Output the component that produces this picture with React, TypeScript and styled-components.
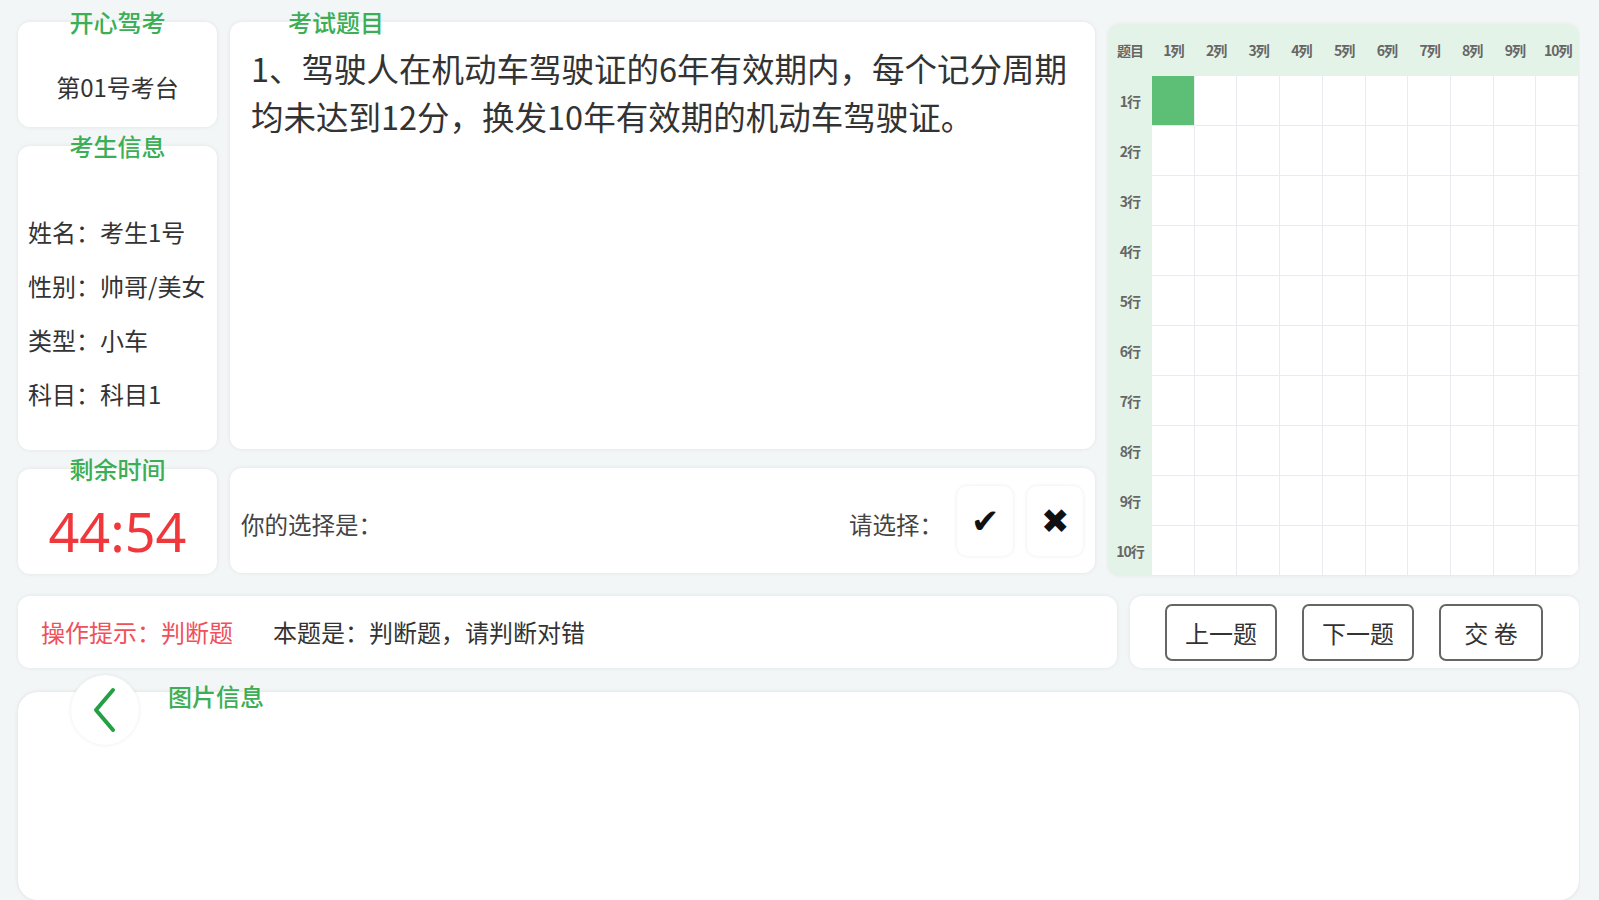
import { Fragment } from 'react'
import styled, { createGlobalStyle } from 'styled-components'

const GlobalStyle = createGlobalStyle`
	html, body {
		margin: 0;
		padding: 0;
		background: #f3f6f7;
		font-family: "Noto Sans CJK SC", "Noto Sans", sans-serif;
		color: #333;
	}
`

const Page = styled.div`
	display: flex;
	flex-direction: column;
	width: 1562px;
	height: 878px;
	padding: 22px 0 0 18px;
	overflow: hidden;
`

const Top = styled.div`
	display: flex;
	gap: 13px;
	height: 552px;
`

const Column = styled.div<{ $width: number }>`
	display: flex;
	flex-direction: column;
	gap: 19px;
	width: ${p => p.$width}px;
	flex-shrink: 0;
`

const Card = styled.div<{ $height: number }>`
	position: relative;
	height: ${p => p.$height}px;
	background: #fff;
	border-radius: 12px;
	box-shadow: 0 0 4px rgba(0, 0, 0, 0.08);
	box-sizing: border-box;
`

const Title = styled.div<{ $left?: number; $top?: number }>`
	position: absolute;
	top: ${p => p.$top ?? -14}px;
	${p => (p.$left !== undefined ? `left: ${p.$left}px;` : 'left: 0; right: 0; text-align: center;')}
	color: #3cae55;
	font-size: 24px;
	font-weight: 500;
	line-height: 28px;
`

const Station = styled.div`
	display: flex;
	align-items: center;
	justify-content: center;
	height: 100%;
	padding-top: 24px;
	box-sizing: border-box;
	font-size: 24px;
	color: #333;
`

const InfoList = styled.div`
	display: flex;
	flex-direction: column;
	gap: 20px;
	padding: 69px 0 0 10px;
	font-size: 24px;
	line-height: 34px;
	color: #333;
`

const Timer = styled.div`
	display: flex;
	align-items: center;
	justify-content: center;
	height: 100%;
	padding-top: 18px;
	box-sizing: border-box;
	font-size: 54px;
	color: #f0373c;
	font-family: "Noto Sans", sans-serif;
`

const Question = styled.div`
	padding: 22px 10px 0 21px;
	font-size: 32.5px;
	line-height: 48px;
	color: #333;
`

const AnswerRow = styled.div`
	display: flex;
	align-items: center;
	height: 100%;
	padding: 6px 12px 0 11px;
	box-sizing: border-box;
	font-size: 23.5px;
	color: #444;
`

const Spacer = styled.div`
	flex: 1;
`

const ChoiceButton = styled.button`
	display: flex;
	align-items: center;
	justify-content: center;
	width: 56px;
	height: 70px;
	margin: -6px 0 0 14px;
	border: none;
	border-radius: 10px;
	background: #fff;
	box-shadow: 0 0 4px rgba(0, 0, 0, 0.08);
	font-size: 34px;
	color: #111;
	padding: 0;
`

const GridPanel = styled.div`
	display: grid;
	grid-template-columns: 44px repeat(10, 1fr);
	grid-template-rows: 52px repeat(10, 1fr);
	width: 471px;
	height: 552px;
	margin-top: 2px;
	background: #e4f3e8;
	border-radius: 12px;
	overflow: hidden;
	box-shadow: 0 0 4px rgba(0, 0, 0, 0.06);
`

const HeadCell = styled.div`
	display: flex;
	align-items: center;
	justify-content: center;
	font-size: 14px;
	font-weight: 700;
	color: #666;
	letter-spacing: -1px;
`

const Cell = styled.div<{ $active?: boolean }>`
	background: ${p => (p.$active ? '#5cbf75' : '#fff')};
	border-right: 1px solid #e8ebef;
	border-bottom: 1px solid #e8ebef;
`

const Middle = styled.div`
	display: flex;
	gap: 13px;
	height: 79px;
	margin-top: 22px;
`

const Hint = styled.div`
	display: flex;
	align-items: center;
	width: 1099px;
	height: 100%;
	padding-left: 23px;
	box-sizing: border-box;
	background: #fff;
	border-radius: 12px;
	box-shadow: 0 0 4px rgba(0, 0, 0, 0.08);
	font-size: 24px;
`

const HintRed = styled.span`
	color: #f0505a;
	margin-right: 40px;
`

const HintText = styled.span`
	color: #333;
`

const NavPanel = styled.div`
	display: flex;
	align-items: center;
	gap: 25px;
	width: 449px;
	height: 100%;
	padding: 2px 0 0 35px;
	box-sizing: border-box;
	background: #fff;
	border-radius: 12px;
	box-shadow: 0 0 4px rgba(0, 0, 0, 0.08);
`

const NavButton = styled.button<{ $width: number }>`
	width: ${p => p.$width}px;
	height: 57px;
	border: 2px solid #666;
	border-radius: 7px;
	background: #fff;
	font-family: "Noto Sans CJK SC", sans-serif;
	font-size: 24px;
	color: #333;
	padding: 0;
`

const PictureCard = styled.div`
	position: relative;
	width: 1561px;
	height: 230px;
	margin-top: 24px;
	background: #fff;
	border-radius: 20px;
	box-shadow: 0 0 4px rgba(0, 0, 0, 0.1);
`

const BackButton = styled.div`
	position: absolute;
	left: 53px;
	top: -17px;
	width: 68px;
	height: 70px;
	border-radius: 50%;
	background: #fff;
	box-shadow: 0 0 4px rgba(0, 0, 0, 0.08);
	display: flex;
	align-items: center;
	justify-content: center;
`

const cols = Array.from({ length: 10 }, (_, i) => `${i + 1}列`)
const rows = Array.from({ length: 10 }, (_, i) => `${i + 1}行`)

const info = ['姓名：考生1号', '性别：帅哥/美女', '类型：小车', '科目：科目1']

export default function App() {
	return (
		<>
			<GlobalStyle />
			<Page>
				<Top>
					<Column $width={199}>
						<Card $height={105}>
							<Title>开心驾考</Title>
							<Station>第01号考台</Station>
						</Card>
						<Card $height={304}>
							<Title>考生信息</Title>
							<InfoList>
								{info.map(line => (
									<div key={line}>{line}</div>
								))}
							</InfoList>
						</Card>
						<Card $height={105}>
							<Title>剩余时间</Title>
							<Timer>44:54</Timer>
						</Card>
					</Column>
					<Column $width={865}>
						<Card $height={427}>
							<Title $left={58}>考试题目</Title>
							<Question>
								1、驾驶人在机动车驾驶证的6年有效期内，每个记分周期均未达到12分，换发10年有效期的机动车驾驶证。
							</Question>
						</Card>
						<Card $height={105}>
							<AnswerRow>
								<span>你的选择是：</span>
								<Spacer />
								<span>请选择：</span>
								<ChoiceButton>✔</ChoiceButton>
								<ChoiceButton>✖</ChoiceButton>
							</AnswerRow>
						</Card>
					</Column>
					<GridPanel>
						<HeadCell>题目</HeadCell>
						{cols.map(c => (
							<HeadCell key={c}>{c}</HeadCell>
						))}
						{rows.map((r, ri) => (
							<Fragment key={r}>
								<HeadCell>{r}</HeadCell>
								{cols.map((c, ci) => (
									<Cell key={r + c} $active={ri === 0 && ci === 0} />
								))}
							</Fragment>
						))}
					</GridPanel>
				</Top>
				<Middle>
					<Hint>
						<HintRed>操作提示：判断题</HintRed>
						<HintText>本题是：判断题，请判断对错</HintText>
					</Hint>
					<NavPanel>
						<NavButton $width={112}>上一题</NavButton>
						<NavButton $width={112}>下一题</NavButton>
						<NavButton $width={104}>交 卷</NavButton>
					</NavPanel>
				</Middle>
				<PictureCard>
					<BackButton>
						<svg width="24" height="46" viewBox="0 0 24 46">
							<path
								d="M20 3 L3 23 L20 43"
								fill="none"
								stroke="#23a043"
								strokeWidth="4"
								strokeLinecap="round"
								strokeLinejoin="round"
							/>
						</svg>
					</BackButton>
					<Title $left={150} $top={-10}>
						图片信息
					</Title>
				</PictureCard>
			</Page>
		</>
	)
}
